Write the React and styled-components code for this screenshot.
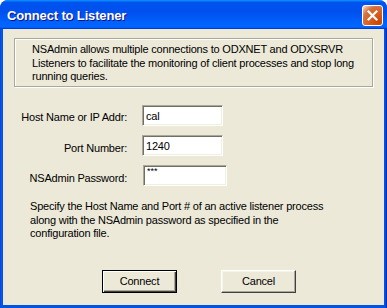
import React from "react";
import styled, { createGlobalStyle } from "styled-components";

const Global = createGlobalStyle`
  html, body { margin: 0; padding: 0; background: #ffffff; }
  body { font-family: "Liberation Sans", Arial, sans-serif; }
`;

const Window = styled.div`
  width: 387px;
  height: 308px;
  box-sizing: border-box;
  display: flex;
  flex-direction: column;
  border-radius: 8px 8px 0 0;
  overflow: hidden;
  background: #0054e3;
`;

const TitleBar = styled.div`
  height: 29px;
  flex: none;
  display: flex;
  align-items: center;
  justify-content: space-between;
  padding: 0 4px 0 7px;
  box-sizing: border-box;
  background: linear-gradient(180deg, #0997ff 0%, #0053ee 8%, #0050ee 40%, #0066ff 88%, #0066ff 93%, #005bff 95%, #003dd7 96%, #003dd7 100%);
`;

const Title = styled.span`
  font-family: "Liberation Sans", Arial, sans-serif;
  font-weight: bold;
  font-size: 13px;
  color: #ffffff;
  text-shadow: 1px 1px #0f1089;
  letter-spacing: -0.15px;
  padding-top: 1px;
`;

const CloseButton = styled.div`
  width: 21px;
  height: 21px;
  box-sizing: border-box;
  border: 1px solid #ffffff;
  border-radius: 3px;
  background: radial-gradient(circle at 85% 85%, #cc4600 0%, #dc6527 55%, #cd7546 70%, #ffccb2 95%, #ffffff 100%);
  display: flex;
  align-items: center;
  justify-content: center;
  margin-top: 1px;
`;

const Frame = styled.div`
  flex: 1;
  display: flex;
  padding: 0 3px 3px;
  background: linear-gradient(90deg, #0831d9 0, #0a5ff0 1px, #0054e3 2px, #0054e3 calc(100% - 2px), #0a3fcf calc(100% - 1px), #001ea0 100%);
`;

const Body = styled.div`
  flex: 1;
  background: #ece9d8;
  display: flex;
  flex-direction: column;
  padding: 9px 11px 0;
  font-size: 11px;
  letter-spacing: -0.2px;
  color: #000000;
`;

const InfoBox = styled.div`
  border: 1px solid #aca899;
  box-shadow: inset 1px 1px #ffffff, 1px 1px #ffffff;
  padding: 4px 12px 4px 17px;
  height: 49px;
  box-sizing: border-box;
  line-height: 13.6px;
`;

const Form = styled.div`
  display: grid;
  grid-template-columns: 113px 85px;
  column-gap: 15px;
  row-gap: 9px;
  margin-top: 18px;
`;

const Label = styled.label`
  text-align: right;
  align-self: center;
  padding-top: ${(p) => p.$dy || 2}px;
  white-space: nowrap;
`;

const Input = styled.input`
  width: ${(p) => p.$w || 81}px;
  height: 21px;
  box-sizing: border-box;
  margin: 0 0 0 ${(p) => p.$dx || 0}px;
  border: 1px solid;
  border-color: #aca899 #ffffff #ffffff #aca899;
  box-shadow: inset 1px 1px #716f64, inset -1px -1px #f1efe2;
  background: #ffffff;
  font-family: "Liberation Sans", Arial, sans-serif;
  font-size: ${(p) => (p.$secret ? 9 : 11)}px;
  line-height: ${(p) => (p.$secret ? "9px" : "normal")};
  letter-spacing: ${(p) => (p.$secret ? "0" : "-0.2px")};
  padding: ${(p) => (p.$secret ? "1px 3px 10px" : "1px 3px 0")};
  outline: none;
  color: #000;
`;

const Note = styled.div`
  margin-top: 14px;
  padding-left: 16px;
  line-height: 13.6px;
`;

const ButtonRow = styled.div`
  display: flex;
  gap: 44px;
  margin-top: 29px;
  padding-left: 88px;
`;

const Button = styled.button`
  width: 75px;
  height: 23px;
  box-sizing: border-box;
  font-family: "Liberation Sans", Arial, sans-serif;
  font-size: 11px;
  letter-spacing: -0.2px;
  color: #000;
  background: #ece9d8;
  border: 1px solid;
  border-color: ${(p) => (p.$default ? "#000000" : "#ffffff #404040 #404040 #ffffff")};
  box-shadow: ${(p) =>
    p.$default
      ? "inset 1px 1px #ffffff, inset -1px -1px #404040, inset -2px -2px #aca899"
      : "inset -1px -1px #aca899, inset 1px 1px #f5f4ea"};
  padding: 0 0 1px;
  cursor: default;
`;

export default function App() {
  return (
    <>
      <Global />
      <Window>
        <TitleBar>
          <Title>Connect to Listener</Title>
          <CloseButton>
            <svg width="13" height="13" viewBox="0 0 13 13">
              <path d="M2.5 2.5 L10.5 10.5 M10.5 2.5 L2.5 10.5" stroke="#ffffff" strokeWidth="2.2" strokeLinecap="square" />
            </svg>
          </CloseButton>
        </TitleBar>
        <Frame>
          <Body>
            <InfoBox>
              NSAdmin allows multiple connections to ODXNET and ODXSRVR
              <br />
              Listeners to facilitate the monitoring of client processes and stop long
              <br />
              running queries.
            </InfoBox>
            <Form>
              <Label htmlFor="host">Host Name or IP Addr:</Label>
              <Input id="host" defaultValue="cal" />
              <Label htmlFor="port" $dy={4}>Port Number:</Label>
              <Input id="port" defaultValue="1240" />
              <Label htmlFor="pw" $dy={4}>NSAdmin Password:</Label>
              <Input id="pw" defaultValue="***" $secret $dx={1} $w={84} />
            </Form>
            <Note>
              Specify the Host Name and Port # of an active listener process
              <br />
              along with the NSAdmin password as specified in the
              <br />
              configuration file.
            </Note>
            <ButtonRow>
              <Button $default>Connect</Button>
              <Button>Cancel</Button>
            </ButtonRow>
          </Body>
        </Frame>
      </Window>
    </>
  );
}
